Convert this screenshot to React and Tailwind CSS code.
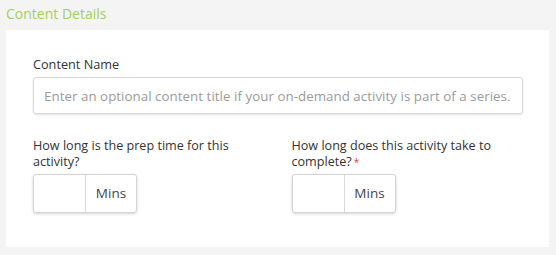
export default function App() {
  return (
    <div className="min-h-screen w-[556px] bg-[#f4f4f4] px-[6px] pt-[5px] font-['Open_Sans',sans-serif]">
      <h2 className="h-[25px] text-[14px] leading-[18px] text-[#a5cf5b]">Content Details</h2>
      <div className="h-[217px] w-[543px] bg-white px-[27px] pt-[24px]">
        <label className="block text-[12.7px] leading-[20px] text-[#333]">Content Name</label>
        <input
          type="text"
          placeholder="Enter an optional content title if your on-demand activity is part of a series."
          className="mt-[3px] h-[37px] w-[490px] rounded-[3px] border border-[#d9d9d9] px-[10px] text-[13.3px] tracking-[0.05px] text-[#444] shadow-[0_1px_2px_rgba(0,0,0,0.12)] outline-none placeholder:text-[#9b9b9b]"
        />
        <div className="mt-[24px] grid grid-cols-2 gap-x-[28px]">
          <div>
            <label className="block text-[12.6px] leading-[16px] text-[#333]">
              How long is the prep time for this
              <br />
              activity?
            </label>
            <div className="mt-[4px] flex h-[39px] w-[104px] rounded-[3px] border border-[#d4d4d4] shadow-[0_1px_3px_rgba(0,0,0,0.18)]">
              <input type="text" className="w-[52px] border-r border-[#d9d9d9] outline-none" />
              <span className="flex flex-1 items-center justify-center text-[13.5px] text-[#444]">Mins</span>
            </div>
          </div>
          <div>
            <label className="block text-[12.6px] leading-[16px] text-[#333]">
              How long does this activity take to
              <br />
              complete?<span className="ml-[2px] align-top text-[10px] text-[#e0463b]">*</span>
            </label>
            <div className="mt-[4px] flex h-[39px] w-[104px] rounded-[3px] border border-[#d4d4d4] shadow-[0_1px_3px_rgba(0,0,0,0.18)]">
              <input type="text" className="w-[52px] border-r border-[#d9d9d9] outline-none" />
              <span className="flex flex-1 items-center justify-center text-[13.5px] text-[#444]">Mins</span>
            </div>
          </div>
        </div>
      </div>
    </div>
  );
}
